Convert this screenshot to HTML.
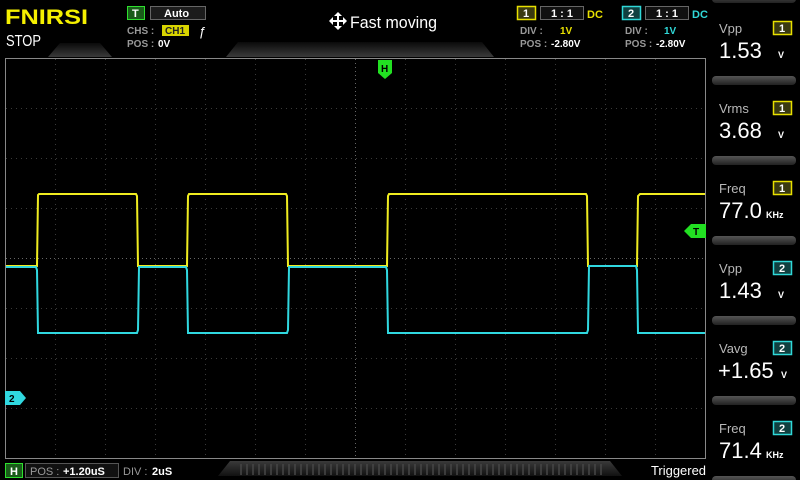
<!DOCTYPE html>
<html><head><meta charset="utf-8"><style>
html,body{margin:0;padding:0;background:#000;width:800px;height:480px;overflow:hidden}
svg{display:block}
text{font-family:"Liberation Sans",sans-serif}
</style></head><body>
<svg width="800" height="480" viewBox="0 0 800 480" xmlns="http://www.w3.org/2000/svg">
<defs>
<linearGradient id="tg" x1="0" y1="0" x2="0" y2="1"><stop offset="0" stop-color="#0a0a0a"/><stop offset="1" stop-color="#3a3a3a"/></linearGradient>
<linearGradient id="sep" x1="0" y1="0" x2="0" y2="1"><stop offset="0" stop-color="#555"/><stop offset="1" stop-color="#222"/></linearGradient>
<linearGradient id="bg2" x1="0" y1="0" x2="0" y2="1"><stop offset="0" stop-color="#3a3a3a"/><stop offset="1" stop-color="#111"/></linearGradient>
<pattern id="tk" x="0" y="0" width="6" height="20" patternUnits="userSpaceOnUse"><rect x="0" y="0" width="2" height="20" fill="#444"/></pattern>
</defs>
<rect width="800" height="480" fill="#000"/>
<polygon points="60,43 100,43 112,57 48,57" fill="url(#tg)"/>
<polygon points="238,42 482,42 494,57 226,57" fill="url(#tg)"/>
<text x="5" y="24" font-size="21" font-weight="bold" fill="#f5f000" textLength="83" lengthAdjust="spacingAndGlyphs">FNIRSI</text>
<text x="6" y="46" font-size="16" fill="#fff" textLength="35" lengthAdjust="spacingAndGlyphs">STOP</text>
<rect x="127.5" y="6.5" width="17" height="13" fill="#1a5c1a" stroke="#2ee02e"/>
<text x="132" y="17" font-size="11" font-weight="bold" fill="#fff">T</text>
<rect x="150.5" y="6.5" width="55" height="13" fill="#1c1c1c" stroke="#666"/>
<text x="164" y="17" font-size="11" font-weight="bold" fill="#fff">Auto</text>
<text x="127" y="34" font-size="10" font-weight="bold" fill="#999">CHS :</text>
<rect x="162" y="25" width="27" height="11" fill="#d8d400"/>
<text x="165" y="34" font-size="10" font-weight="bold" fill="#222">CH1</text>
<text x="199" y="36" font-size="13" fill="#fff">ƒ</text>
<text x="127" y="47" font-size="10" font-weight="bold" fill="#999">POS :</text>
<text x="158" y="47" font-size="10" font-weight="bold" fill="#fff">0V</text>
<g fill="#fff"><rect x="331" y="20" width="14" height="2"/><rect x="337" y="14" width="2" height="14"/>
<polygon points="338,12 334,16 342,16"/><polygon points="338,30 334,26 342,26"/><polygon points="329,21 333,17 333,25"/><polygon points="347,21 343,17 343,25"/></g>
<text x="350" y="28" font-size="17" fill="#fff" textLength="87" lengthAdjust="spacingAndGlyphs">Fast moving</text>
<rect x="517.5" y="6.5" width="18" height="13" fill="#3a3a10" stroke="#e8e000" stroke-width="1.5"/>
<text x="523" y="17" font-size="11" font-weight="bold" fill="#fff">1</text>
<rect x="540.5" y="6.5" width="43" height="13" fill="#111" stroke="#666"/>
<text x="551" y="17" font-size="11" font-weight="bold" fill="#fff">1 : 1</text>
<text x="587" y="18" font-size="11" font-weight="bold" fill="#e8e000">DC</text>
<text x="520" y="34" font-size="10" font-weight="bold" fill="#999">DIV :</text>
<text x="560" y="34" font-size="10" font-weight="bold" fill="#e8e000">1V</text>
<text x="520" y="47" font-size="10" font-weight="bold" fill="#999">POS :</text>
<text x="551" y="47" font-size="10" font-weight="bold" fill="#fff">-2.80V</text>
<rect x="622.5" y="6.5" width="18" height="13" fill="#104040" stroke="#30d8d8" stroke-width="1.5"/>
<text x="628" y="17" font-size="11" font-weight="bold" fill="#fff">2</text>
<rect x="645.5" y="6.5" width="43" height="13" fill="#111" stroke="#666"/>
<text x="656" y="17" font-size="11" font-weight="bold" fill="#fff">1 : 1</text>
<text x="692" y="18" font-size="11" font-weight="bold" fill="#30d8d8">DC</text>
<text x="625" y="34" font-size="10" font-weight="bold" fill="#999">DIV :</text>
<text x="664" y="34" font-size="10" font-weight="bold" fill="#30d8d8">1V</text>
<text x="625" y="47" font-size="10" font-weight="bold" fill="#999">POS :</text>
<text x="656" y="47" font-size="10" font-weight="bold" fill="#fff">-2.80V</text>
<rect x="5.5" y="58.5" width="700" height="400" fill="#000" stroke="#888" stroke-width="1"/>
<g stroke="#3a3a3a" stroke-width="1" stroke-dasharray="1,4">
<path d="M55.5 59V458M105.5 59V458M155.5 59V458M205.5 59V458M255.5 59V458M305.5 59V458M405.5 59V458M455.5 59V458M505.5 59V458M555.5 59V458M605.5 59V458M655.5 59V458"/>
<path d="M6 108.5H705M6 158.5H705M6 208.5H705M6 308.5H705M6 358.5H705M6 408.5H705"/>
</g>
<g stroke="#666" stroke-width="1" stroke-dasharray="1,3">
<path d="M355.5 59V458M6 258.5H705"/>
</g>
<path d="M6,266 L37,266 L38,195 L39,194 L136,194 L137,196 L138,266 L187,266 L188,196 L189,194 L286,194 L287,196 L288,266 L387,266 L388,196 L389,194 L586,194 L587,196 L588,266 L637,266 L638,196 L640,194 L705,194" fill="none" stroke="#f0ec20" stroke-width="2"/>
<path d="M6,267 L36,267 L37,270 L38,333 L137,333 L138,330 L139,267 L186,267 L187,270 L188,333 L287,333 L288,330 L289,267 L386,267 L387,270 L388,333 L587,333 L588,330 L589,266 L636,266 L637,270 L638,333 L705,333" fill="none" stroke="#30d8e0" stroke-width="2"/>
<polygon points="378,60 392,60 392,73 385,79 378,73" fill="#22e022"/>
<text x="381" y="72" font-size="10" font-weight="bold" fill="#000">H</text>
<polygon points="706,224 691,224 684,231 691,238 706,238" fill="#22e022"/>
<text x="693" y="235" font-size="10" font-weight="bold" fill="#000">T</text>
<polygon points="5,391 20,391 26,398 20,405 5,405" fill="#30d8e0"/>
<text x="9" y="402" font-size="10" font-weight="bold" fill="#000">2</text>
<g fill="url(#sep)">
<rect x="712" y="-6" width="84" height="9" rx="4"/>
<rect x="712" y="76" width="84" height="9" rx="4"/>
<rect x="712" y="156" width="84" height="9" rx="4"/>
<rect x="712" y="236" width="84" height="9" rx="4"/>
<rect x="712" y="316" width="84" height="9" rx="4"/>
<rect x="712" y="396" width="84" height="9" rx="4"/>
<rect x="712" y="476" width="84" height="9" rx="4"/>
</g>
<g font-size="13" fill="#b8b8b8">
<text x="719" y="33">Vpp</text><text x="719" y="113">Vrms</text><text x="719" y="193">Freq</text>
<text x="719" y="273">Vpp</text><text x="719" y="353">Vavg</text><text x="719" y="433">Freq</text>
</g>
<g stroke-width="1.5">
<rect x="773.5" y="21.5" width="18" height="13" fill="#3a3a10" stroke="#e8e000"/>
<rect x="773.5" y="101.5" width="18" height="13" fill="#3a3a10" stroke="#e8e000"/>
<rect x="773.5" y="181.5" width="18" height="13" fill="#3a3a10" stroke="#e8e000"/>
<rect x="773.5" y="261.5" width="18" height="13" fill="#104040" stroke="#30d8d8"/>
<rect x="773.5" y="341.5" width="18" height="13" fill="#104040" stroke="#30d8d8"/>
<rect x="773.5" y="421.5" width="18" height="13" fill="#104040" stroke="#30d8d8"/>
</g>
<g font-size="11" font-weight="bold" fill="#fff">
<text x="779" y="32">1</text><text x="779" y="112">1</text><text x="779" y="192">1</text>
<text x="779" y="272">2</text><text x="779" y="352">2</text><text x="779" y="432">2</text>
</g>
<g font-size="22" fill="#fff">
<text x="719" y="58">1.53</text><text x="719" y="138">3.68</text><text x="719" y="218">77.0</text>
<text x="719" y="298">1.43</text><text x="718" y="378">+1.65</text><text x="719" y="458">71.4</text>
</g>
<g font-size="9" font-weight="bold" fill="#fff">
<text x="778" y="58">V</text><text x="778" y="138">V</text><text x="766" y="218">KHz</text>
<text x="778" y="298">V</text><text x="781" y="378">V</text><text x="766" y="458">KHz</text>
</g>
<polygon points="230,461 610,461 622,476 218,476" fill="url(#bg2)"/>
<rect x="238" y="464" width="364" height="11" fill="url(#tk)" opacity="0.8"/>
<rect x="5.5" y="463.5" width="17" height="14" fill="#1a5c1a" stroke="#2ee02e"/>
<text x="10" y="475" font-size="11" font-weight="bold" fill="#fff">H</text>
<rect x="25.5" y="463.5" width="93" height="14" fill="#111" stroke="#555"/>
<text x="30" y="475" font-size="11" fill="#999">POS :</text>
<text x="63" y="475" font-size="11" font-weight="bold" fill="#fff">+1.20uS</text>
<text x="123" y="475" font-size="11" fill="#999">DIV :</text>
<text x="152" y="475" font-size="11" font-weight="bold" fill="#fff">2uS</text>
<text x="651" y="475" font-size="13" fill="#fff" textLength="55" lengthAdjust="spacingAndGlyphs">Triggered</text>
</svg>
</body></html>
